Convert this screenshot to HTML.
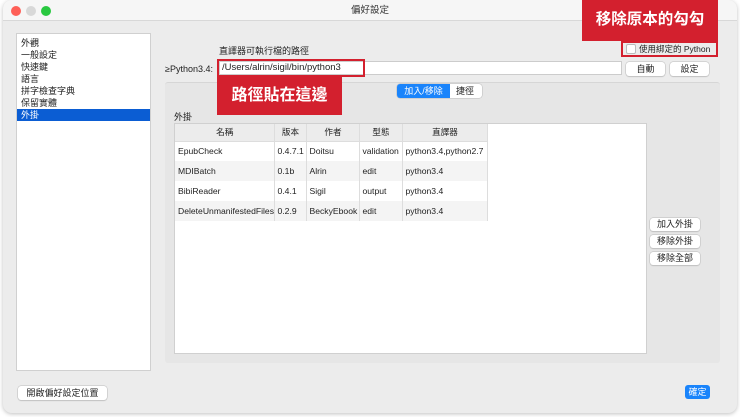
<!DOCTYPE html>
<html><head><meta charset="utf-8"><style>
*{box-sizing:border-box;margin:0;padding:0}
body{width:740px;height:417px;background:#fff;font-family:"Liberation Sans","Noto Sans CJK TC",sans-serif;font-size:9px;color:#222;position:relative;overflow:hidden}
.a{position:absolute}
.win{left:3px;top:0;width:734px;height:413px;background:#ececec;border-radius:9px;box-shadow:0 1px 4px rgba(0,0,0,.25);overflow:hidden}
.title{left:0;top:0;width:734px;height:21px;background:#f6f6f6;border-bottom:1px solid #d8d8d8;text-align:center;line-height:21px;font-size:9.5px;color:#333}
.dot{width:10px;height:10px;border-radius:50%;top:6px}
.btn{background:#fff;border-radius:3px;box-shadow:0 0 0 .5px #bbb,0 1px 1px rgba(0,0,0,.15);text-align:center;line-height:14px;font-size:9px;height:14px}
.red{background:#d3202e;color:#fff;font-weight:bold;text-align:center}
table{border-collapse:collapse;font-size:8.6px;table-layout:fixed}
td,th{height:20px;padding:0 2px 0 3px;border-right:1px solid #ddd;white-space:nowrap;text-align:left;font-weight:normal;overflow:hidden}
th{text-align:center;background:#ececec;height:17px;border-bottom:1px solid #ddd}
tr:nth-child(odd) td{background:#f4f4f4}
</style></head><body>
<div class="a win">
 <div class="a title">偏好設定</div>
 <div class="a dot" style="left:8px;background:#fe5f57"></div>
 <div class="a dot" style="left:23px;background:#d8d8d8"></div>
 <div class="a dot" style="left:38px;background:#29c840"></div>
 <div class="a" style="left:162px;top:82px;width:555px;height:281px;background:#e6e6e6;border-top:1px solid #d6d6d6;border-radius:3px"></div>
 <div class="a" style="left:13px;top:33px;width:135px;height:338px;background:#fff;border:1px solid #d0d0d0;line-height:12px;padding-top:3px">
  <div style="padding-left:4px">外觀</div><div style="padding-left:4px">一般設定</div><div style="padding-left:4px">快速鍵</div><div style="padding-left:4px">語言</div><div style="padding-left:4px">拼字檢查字典</div><div style="padding-left:4px">保留實體</div><div style="padding-left:4px;background:#0b5dd3;color:#fff">外掛</div>
 </div>
 <div class="a" style="left:216px;top:44px">直譯器可執行檔的路徑</div>
 <div class="a" style="left:162px;top:64px">≥Python3.4:</div>
 <div class="a" style="left:216px;top:61px;width:403px;height:14px;background:#fff;border:1px solid #ccc;padding-left:2px;line-height:12px;font-size:9.5px">/Users/alrin/sigil/bin/python3</div>
 <div class="a" style="left:214px;top:59px;width:148px;height:18px;border:2px solid #d3202e"></div>
 <div class="a red" style="left:214px;top:77px;width:125px;height:38px;line-height:38px;font-size:16px">路徑貼在這邊</div>
 <div class="a red" style="left:579px;top:0;width:136px;height:41px;line-height:40px;font-size:15.5px">移除原本的勾勾</div>
 <div class="a" style="left:618px;top:41px;width:97px;height:16px;border:2px solid #d3202e;background:#ececec"></div>
 <div class="a" style="left:623px;top:44px;width:10px;height:10px;background:#fff;border:1px solid #bbb;border-radius:2px"></div>
 <div class="a" style="left:636px;top:43px;font-size:8.5px;white-space:nowrap">使用綁定的 Python</div>
 <div class="a btn" style="left:623px;top:62px;width:39px">自動</div>
 <div class="a btn" style="left:667px;top:62px;width:39px">設定</div>
 <div class="a" style="left:394px;top:84px;width:85px;height:14px;background:#fff;border-radius:3px;box-shadow:0 0 0 .5px #bbb;font-size:9px;line-height:14px">
  <span style="display:inline-block;width:53px;background:#1a84fb;color:#fff;text-align:center;border-radius:3px 0 0 3px">加入/移除</span><span style="display:inline-block;width:30px;text-align:center">捷徑</span></div>
 <div class="a" style="left:171px;top:110px">外掛</div>
 <div class="a" style="left:171px;top:123px;width:473px;height:231px;background:#fff;border:1px solid #d0d0d0">
  <table style="width:312px">
   <colgroup><col style="width:99px"><col style="width:32px"><col style="width:53px"><col style="width:43px"><col style="width:85px"></colgroup>
   <tr><th>名稱</th><th>版本</th><th>作者</th><th>型態</th><th>直譯器</th></tr>
   <tr><td>EpubCheck</td><td>0.4.7.1</td><td>Doitsu</td><td>validation</td><td>python3.4,python2.7</td></tr>
   <tr><td>MDIBatch</td><td>0.1b</td><td>Alrin</td><td>edit</td><td>python3.4</td></tr>
   <tr><td>BibiReader</td><td>0.4.1</td><td>Sigil</td><td>output</td><td>python3.4</td></tr>
   <tr><td>DeleteUnmanifestedFiles</td><td>0.2.9</td><td>BeckyEbook</td><td>edit</td><td>python3.4</td></tr>
  </table>
 </div>
 <div class="a btn" style="left:647px;top:218px;width:50px;height:13px;line-height:13px">加入外掛</div>
 <div class="a btn" style="left:647px;top:235px;width:50px;height:13px;line-height:13px">移除外掛</div>
 <div class="a btn" style="left:647px;top:252px;width:50px;height:13px;line-height:13px">移除全部</div>
 <div class="a btn" style="left:15px;top:386px;width:89px">開啟偏好設定位置</div>
 <div class="a btn" style="left:682px;top:385px;width:25px;background:#1a84fb;color:#fff;box-shadow:none">確定</div>
</div>
</body></html>
